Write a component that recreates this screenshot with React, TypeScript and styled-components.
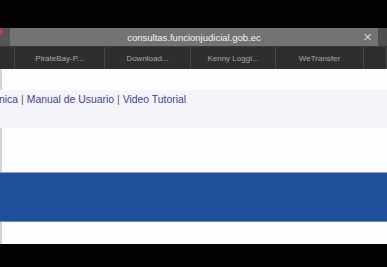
import React from "react";
import styled, { createGlobalStyle } from "styled-components";

const Global = createGlobalStyle`
  html, body { margin: 0; padding: 0; background: #000; }
  body { width: 387px; height: 267px; overflow: hidden; font-family: "Liberation Sans", Arial, sans-serif; }
`;

const Frame = styled.div`
  width: 387px;
  height: 267px;
  display: flex;
  flex-direction: column;
  background: #000;
`;

const Letterbox = styled.div<{ $h: number }>`
  height: ${(p) => p.$h}px;
  background: #020202;
  flex: none;
`;

const AddressBar = styled.div`
  height: 18px;
  display: flex;
  align-items: stretch;
  background: #4a4a4a;
  flex: none;
`;

const WindowEdge = styled.div`
  width: 10px;
  background: #555;
  position: relative;
  &::before {
    content: "";
    position: absolute;
    left: 0;
    top: 1px;
    width: 3px;
    height: 6px;
    background: #d8343c;
    border-radius: 0 3px 3px 0;
  }
`;

const UrlField = styled.div`
  flex: 1;
  background: #737373;
  color: #f4f4f4;
  font-size: 9.5px;
  display: flex;
  align-items: center;
  justify-content: center;
  position: relative;
`;

const CloseX = styled.span`
  position: absolute;
  right: 6px;
  top: 50%;
  transform: translateY(-50%);
  color: #cfcfcf;
  font-size: 11px;
  line-height: 1;
`;

const RightEdge = styled.div`
  width: 9px;
  background: #4d4d4d;
`;

const TabBar = styled.div`
  height: 23px;
  display: flex;
  background: #2b2b2b;
  flex: none;
  border-top: 1px solid #3a3a3a;
  box-sizing: border-box;
`;

const Tab = styled.div<{ $w: number }>`
  width: ${(p) => p.$w}px;
  flex: none;
  border-right: 1px solid #474747;
  color: #a8a8a8;
  font-size: 8px;
  display: flex;
  align-items: center;
  justify-content: center;
  box-sizing: border-box;
  background: #2e2e2e;
`;

const Page = styled.div`
  flex: 1;
  background: #fdfeff;
  border-left: 2px solid #d4d4d6;
  display: flex;
  flex-direction: column;
`;

const Spacer = styled.div<{ $h: number }>`
  height: ${(p) => p.$h}px;
  flex: none;
`;

const LinkBand = styled.div`
  height: 38px;
  flex: none;
  background: #f5f5f9;
  display: flex;
  align-items: flex-start;
  padding-top: 4px;
  box-sizing: border-box;
  font-size: 10.4px;
  color: #4040a8;
  margin-left: -3px;
`;

const Sep = styled.span`
  color: #555;
  margin: 0 3px;
`;

const BlueBand = styled.div`
  height: 50px;
  flex: none;
  background: #1f509b;
  border-top: 1px solid #8aa1c8;
  border-bottom: 1px solid #6d8cc0;
  box-sizing: border-box;
  margin-left: -2px;
`;

export default function App() {
  return (
    <>
      <Global />
      <Frame>
        <Letterbox $h={28} />
        <AddressBar>
          <WindowEdge />
          <UrlField>
            consultas.funcionjudicial.gob.ec
            <CloseX>✕</CloseX>
          </UrlField>
          <RightEdge />
        </AddressBar>
        <TabBar>
          <Tab $w={15} />
          <Tab $w={90}>PirateBay-P...</Tab>
          <Tab $w={86}>Download...</Tab>
          <Tab $w={85}>Kenny Loggi...</Tab>
          <Tab $w={88}>WeTransfer</Tab>
          <Tab $w={23} />
        </TabBar>
        <Page>
          <Spacer $h={21} />
          <LinkBand>
            nica<Sep>|</Sep>Manual de Usuario<Sep>|</Sep>Video Tutorial
          </LinkBand>
          <Spacer $h={44} />
          <BlueBand />
          <Spacer $h={22} />
        </Page>
        <Letterbox $h={23} />
      </Frame>
    </>
  );
}
